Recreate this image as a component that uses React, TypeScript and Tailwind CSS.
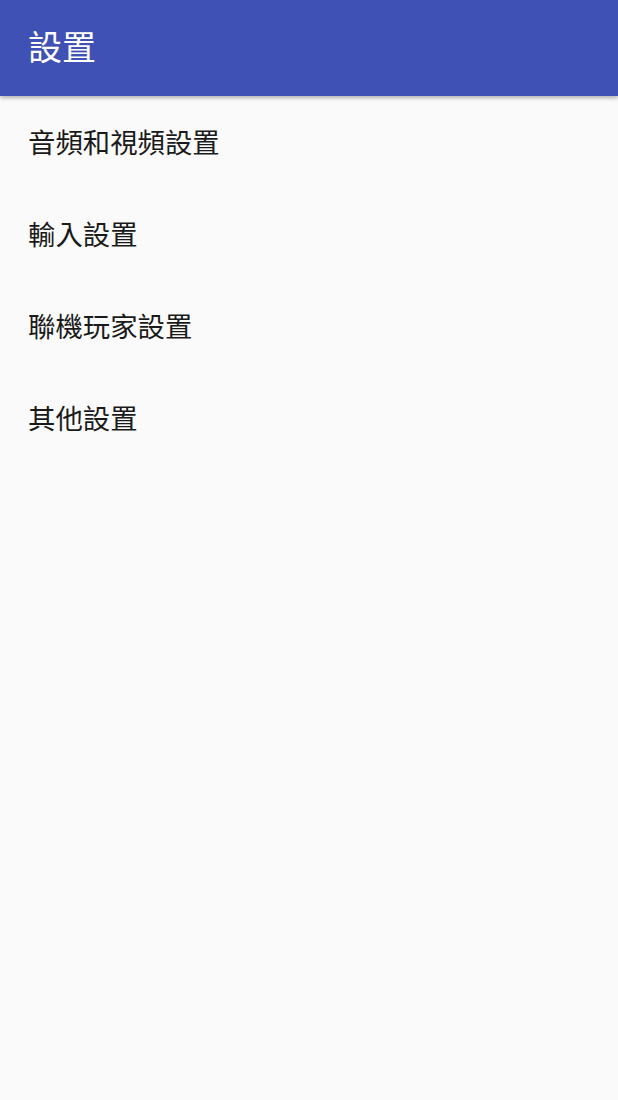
const items = ["音頻和視頻設置", "輸入設置", "聯機玩家設置", "其他設置"];

const App = () => {
    return (
        <div
            className="min-h-[1100px] w-full bg-[#fafafa]"
            style={{ fontFamily: '"Noto Sans CJK TC", "Noto Sans", sans-serif' }}
        >
            <div className="relative z-10 flex h-[96px] items-center bg-[#3f51b5] px-[28px] pb-[4px] shadow-[0_2px_4px_rgba(0,0,0,0.3)]">
                <h1 className="text-[34px] leading-none text-white">設置</h1>
            </div>
            <div className="flex flex-col">
                {items.map((item) => (
                    <div key={item} className="flex h-[92px] items-center px-[28px]">
                        <span className="text-[27.4px] leading-none text-[#1a1a1a]">{item}</span>
                    </div>
                ))}
            </div>
        </div>
    );
};

export default App;
